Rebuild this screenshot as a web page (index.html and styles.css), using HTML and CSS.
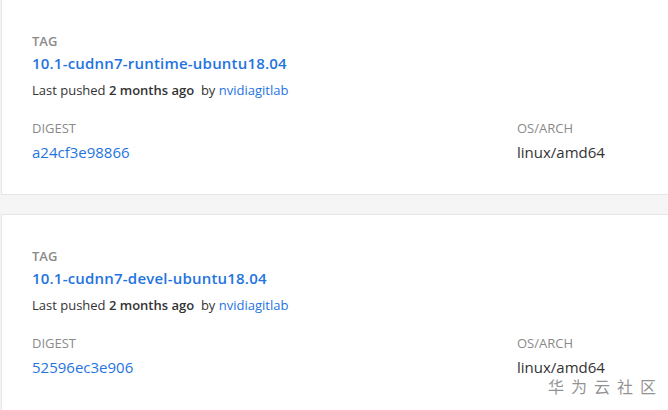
FILE: index.html
```html
<!doctype html>
<html lang="en">
  <head>
    <meta charset="UTF-8" />
    <meta name="viewport" content="width=device-width, initial-scale=1.0" />
    <title>Tags</title>
    <link rel="stylesheet" href="styles.css">
  </head>
  <body>
    <div class="tag-list">
      <div class="tag-card">
        <div class="tag-head">
          <div class="label bold">TAG</div>
          <a class="tag-name" href="#">10.1-cudnn7-runtime-ubuntu18.04</a>
          <div class="pushed">
            Last pushed <b>2 months ago</b>&nbsp; by <a href="#">nvidiagitlab</a>
          </div>
        </div>
        <div class="tag-row">
          <div class="col-digest">
            <div class="label">DIGEST</div>
            <a class="digest" href="#">a24cf3e98866</a>
          </div>
          <div class="col-arch">
            <div class="label">OS/ARCH</div>
            <div class="arch">linux/amd64</div>
          </div>
        </div>
      </div>

      <div class="tag-card">
        <div class="tag-head">
          <div class="label bold">TAG</div>
          <a class="tag-name" href="#">10.1-cudnn7-devel-ubuntu18.04</a>
          <div class="pushed">
            Last pushed <b>2 months ago</b>&nbsp; by <a href="#">nvidiagitlab</a>
          </div>
        </div>
        <div class="tag-row">
          <div class="col-digest">
            <div class="label">DIGEST</div>
            <a class="digest" href="#">52596ec3e906</a>
          </div>
          <div class="col-arch">
            <div class="label">OS/ARCH</div>
            <div class="arch">linux/amd64</div>
          </div>
        </div>
      </div>
    </div>

    <div class="watermark">华为云社区</div>
  </body>
</html>
```

FILE: styles.css
```css
/* Reset and general styles */
* {
  margin: 0;
  padding: 0;
  box-sizing: border-box;
}

body {
  background-color: #f5f5f5;
  font-family: "Open Sans", "Noto Sans", sans-serif;
  color: #333;
  overflow: hidden;
  height: 410px;
}

a {
  color: #1f74e0;
  text-decoration: none;
}

/* Tag cards */
.tag-list {
  width: 720px;
  margin-left: 1px;
  margin-top: -1px;
  display: flex;
  flex-direction: column;
  gap: 19px;
}

.tag-card {
  background-color: #fff;
  border: 1px solid #e6e6e6;
  padding: 32px 30px 31px;
}

.tag-card:last-child {
  padding-bottom: 40px;
}

.tag-head {
  display: flex;
  flex-direction: column;
}

.label {
  font-size: 13px;
  line-height: 18px;
  color: #8a8a8a;
}

.label.bold {
  font-weight: 600;
}

.tag-name {
  font-size: 15px;
  font-weight: 600;
  letter-spacing: 0.2px;
  line-height: 22px;
  margin-top: 2px;
}

.pushed {
  font-size: 13px;
  line-height: 18px;
  margin-top: 7px;
}

.pushed b {
  font-weight: 600;
}

.tag-row {
  display: flex;
  margin-top: 20px;
}

.col-digest {
  width: 485px;
  display: flex;
  flex-direction: column;
}

.digest,
.arch {
  font-size: 15px;
  line-height: 22px;
  margin-top: 4px;
}

/* Site watermark in the corner */
.watermark {
  position: absolute;
  left: 548px;
  top: 374px;
  font-family: "Noto Sans CJK SC", sans-serif;
  font-size: 16px;
  letter-spacing: 7px;
  color: rgba(110, 110, 110, 0.75);
}
```
